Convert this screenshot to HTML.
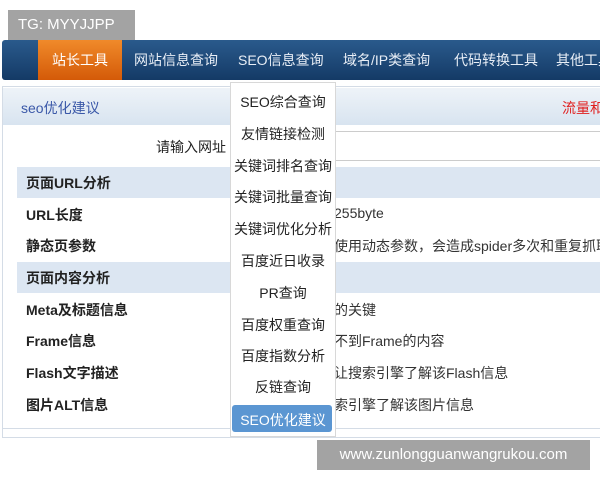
<!DOCTYPE html>
<html><head><meta charset="utf-8"><style>
*{margin:0;padding:0;box-sizing:border-box}
body{width:600px;height:480px;background:#fff;position:relative;overflow:hidden;font-family:"Liberation Sans","Noto Sans CJK SC",sans-serif;font-size:13px;color:#222}
.a{position:absolute;white-space:nowrap}
.nav{left:2px;top:40px;width:598px;height:40px;background:linear-gradient(#2a5a8c,#143a66);border-radius:3px 0 0 3px}
.tab{left:38px;top:40px;width:84px;height:40px;background:linear-gradient(#f08a2a,#d45a08)}
.ni{top:50px;color:#e8eef6;font-size:14px}
.panel{left:2px;top:86px;width:600px;height:352px;border:1px solid #d4dce6;border-right:none}
.hdr{left:3px;top:88px;width:597px;height:37px;background:linear-gradient(#eef3f8,#d8e4f0)}
.band{left:17px;width:583px;height:31px;background:#dce6f2}
.lb{left:26px;font-weight:bold;font-size:14px;color:#222}
.rt{left:334px;font-size:14px;color:#333}
.dd{left:230px;top:82px;width:106px;height:355px;background:#fff;border:1px solid #d8d8d8}
.di{left:230px;width:106px;text-align:center;font-size:14px;color:#222}
</style></head><body>
<div class="a" style="left:8px;top:10px;width:127px;height:30px;background:#a3a3a3;color:#fff;font-size:15px;line-height:30px;padding-left:10px">TG: MYYJJPP</div>
<div class="a nav"></div>
<div class="a tab"></div>
<div class="a ni" style="left:52px;color:#fff">站长工具</div>
<div class="a ni" style="left:134px">网站信息查询</div>
<div class="a ni" style="left:238px">SEO信息查询</div>
<div class="a ni" style="left:343px">域名/IP类查询</div>
<div class="a ni" style="left:454px">代码转换工具</div>
<div class="a ni" style="left:556px">其他工具</div>
<div class="a panel"></div>
<div class="a hdr"></div>
<div class="a" style="left:21px;top:98px;color:#3a58a8;font-size:14px">seo优化建议</div>
<div class="a" style="left:562px;top:98px;color:#e02020;font-size:14px">流量和</div>
<div class="a" style="left:156px;top:137px;font-size:14px">请输入网址</div>
<div class="a" style="left:230px;top:131px;width:370px;height:30px;border:1px solid #ccc;border-right:none"></div>
<div class="a band" style="top:167px"></div>
<div class="a lb" style="top:173px">页面URL分析</div>
<div class="a lb" style="top:205px">URL长度</div>
<div class="a lb" style="top:236px">静态页参数</div>
<div class="a band" style="top:262px"></div>
<div class="a lb" style="top:268px">页面内容分析</div>
<div class="a lb" style="top:300px">Meta及标题信息</div>
<div class="a lb" style="top:331px">Frame信息</div>
<div class="a lb" style="top:363px">Flash文字描述</div>
<div class="a lb" style="top:395px">图片ALT信息</div>
<div class="a rt" style="top:205px">255byte</div>
<div class="a rt" style="top:236px">使用动态参数，会造成spider多次和重复抓取</div>
<div class="a rt" style="top:300px">的关键</div>
<div class="a rt" style="top:331px">不到Frame的内容</div>
<div class="a rt" style="top:363px">让搜索引擎了解该Flash信息</div>
<div class="a rt" style="top:395px">索引擎了解该图片信息</div>
<div class="a" style="left:2px;top:428px;width:598px;height:1px;background:#d4dce6"></div>
<div class="a dd"></div>
<div class="a di" style="top:92px">SEO综合查询</div>
<div class="a di" style="top:124px">友情链接检测</div>
<div class="a di" style="top:156px">关键词排名查询</div>
<div class="a di" style="top:187px">关键词批量查询</div>
<div class="a di" style="top:219px">关键词优化分析</div>
<div class="a di" style="top:251px">百度近日收录</div>
<div class="a di" style="top:283px">PR查询</div>
<div class="a di" style="top:315px">百度权重查询</div>
<div class="a di" style="top:346px">百度指数分析</div>
<div class="a di" style="top:377px">反链查询</div>
<div class="a" style="left:232px;top:405px;width:100px;height:27px;background:#5b96d2;border-radius:3px"></div>
<div class="a di" style="top:410px;color:#fff">SEO优化建议</div>
<div class="a" style="left:317px;top:440px;width:273px;height:30px;background:#a3a3a3;color:#fff;font-size:15px;line-height:30px;text-align:center">www.zunlongguanwangrukou.com</div>
</body></html>
